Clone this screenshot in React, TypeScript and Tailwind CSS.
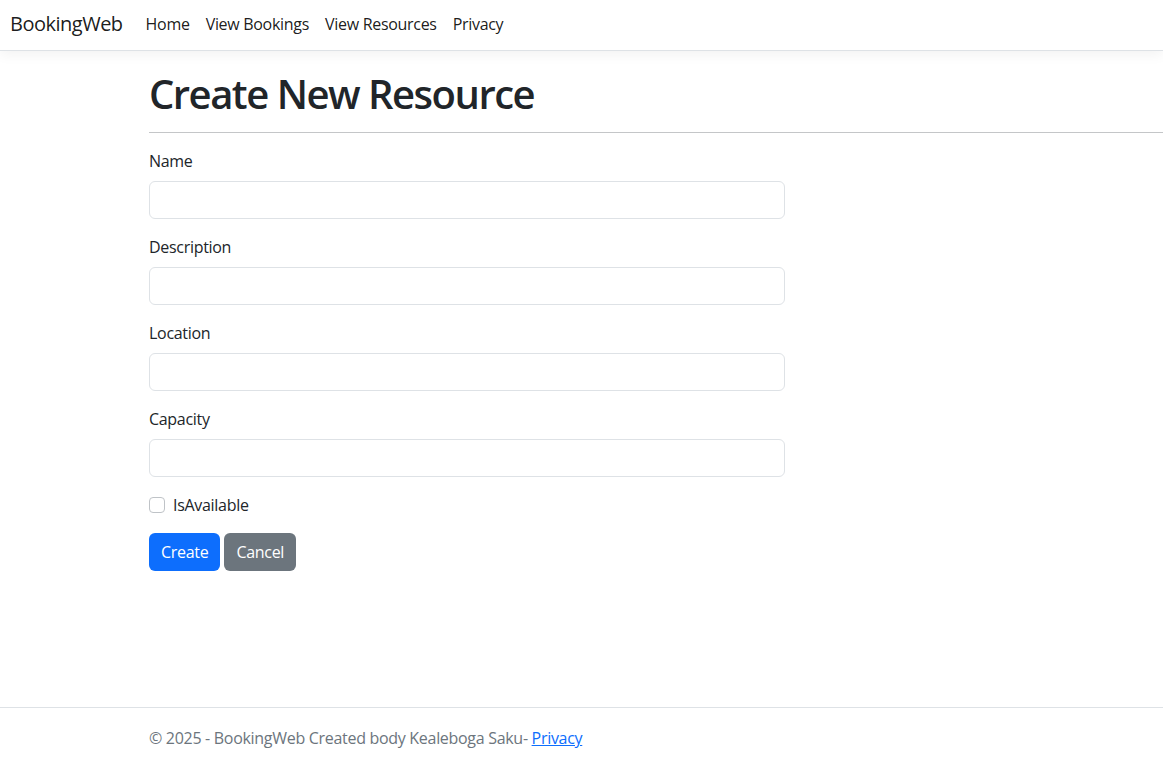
import React from "react";

const fields = ["Name", "Description", "Location", "Capacity"];

const App = () => {
  return (
    <div
      className="min-h-[762px] flex flex-col bg-white text-[#212529] text-base tracking-[-0.3px]"
      style={{ fontFamily: '"Open Sans", "Noto Sans", sans-serif' }}
    >
      <header>
        <nav className="h-[51px] flex items-center border-b border-[#dee2e6] bg-white shadow-[0_4px_12px_rgba(0,0,0,0.05)]">
          <a className="ml-[10px] mr-[15px] text-[20px] text-black/90 leading-[30px] pb-[2px] tracking-[-0.5px]">
            BookingWeb
          </a>
          <ul className="flex items-center pb-[2px]">
            {["Home", "View Bookings", "View Resources", "Privacy"].map((l) => (
              <li key={l} className="px-2 text-black/90 leading-6">
                {l}
              </li>
            ))}
          </ul>
        </nav>
      </header>

      <main className="flex-1 pl-[149px] pt-[17px]">
        <h1 className="text-[40px] font-semibold leading-[48px] mb-2 pt-[2px] tracking-[-1.5px]">
          Create New Resource
        </h1>
        <hr className="mt-[14px] mb-4 border-t border-[#c4c6c8]" />

        <form className="w-[636px]">
          {fields.map((f) => (
            <div key={f} className="mb-4">
              <label className="block mb-2 leading-6">{f}</label>
              <input
                type="text"
                className="block w-full h-[38px] px-3 border border-[#dee2e6] rounded-md bg-white"
              />
            </div>
          ))}

          <div className="mb-4 flex items-center h-6">
            <input
              type="checkbox"
              className="appearance-none w-4 h-4 border border-[#bfc3c7] rounded-[4px] bg-white"
            />
            <label className="ml-2 leading-6">IsAvailable</label>
          </div>

          <div className="flex gap-1">
            <button
              type="button"
              className="h-[38px] px-3 rounded-md bg-[#0d6efd] text-white leading-6"
            >
              Create
            </button>
            <button
              type="button"
              className="h-[38px] px-3 rounded-md bg-[#6c757d] text-white leading-6"
            >
              Cancel
            </button>
          </div>
        </form>
      </main>

      <footer className="border-t border-[#dee2e6] h-[55px] leading-[60px] pl-[149px] text-[#6c757d] whitespace-nowrap">
        © 2025 - BookingWeb Created body Kealeboga Saku-{" "}
        <a className="text-[#0d6efd] underline">Privacy</a>
      </footer>
    </div>
  );
};

export default App;
